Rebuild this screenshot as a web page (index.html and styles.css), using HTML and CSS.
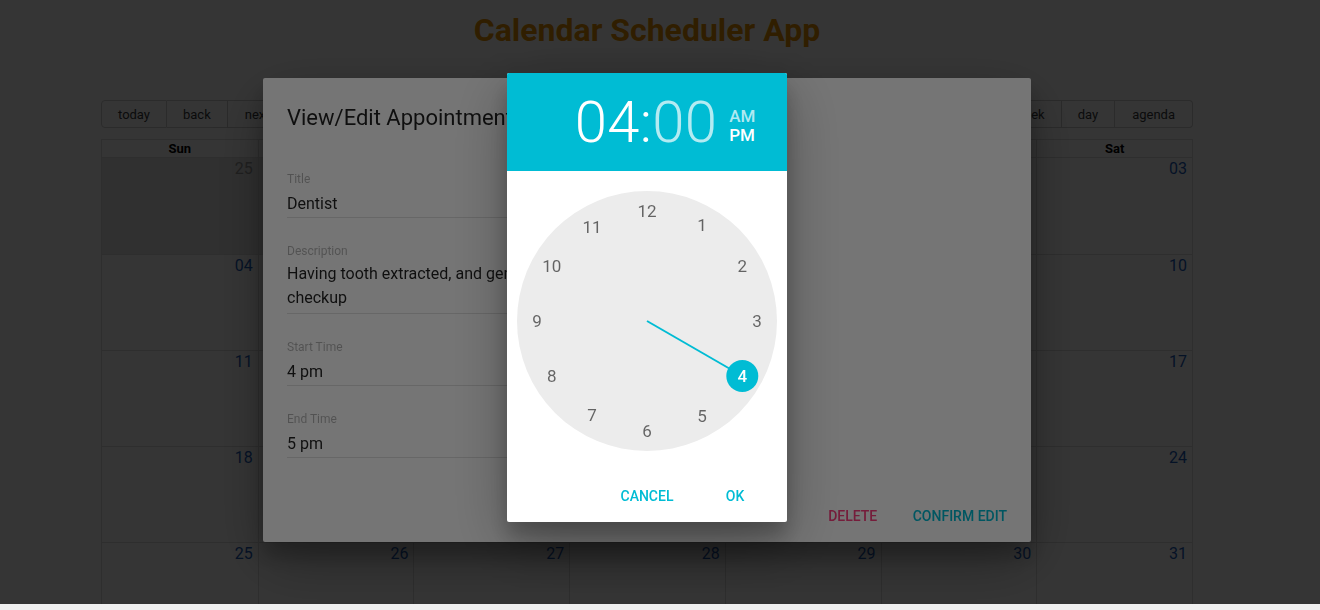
FILE: index.html
```html
<!DOCTYPE html>
<html lang="en">
<head>
<meta charset="utf-8">
<title>Calendar Scheduler App</title>
<link rel="stylesheet" href="styles.css">
</head>
<body>
<div class="app">
  <h1 class="app-title">Calendar Scheduler App</h1>
  <div class="calendar">
    <div class="toolbar">
      <div class="btn-group">
        <button class="tb-btn">today</button>
        <button class="tb-btn">back</button>
        <button class="tb-btn">next</button>
      </div>
      <div class="toolbar-label">March 2018</div>
      <div class="btn-group">
        <button class="tb-btn">month</button>
        <button class="tb-btn">week</button>
        <button class="tb-btn">day</button>
        <button class="tb-btn">agenda</button>
      </div>
    </div>
    <div class="month">
      <div class="month-header">
        <div class="hcell">Sun</div><div class="hcell">Mon</div><div class="hcell">Tue</div><div class="hcell">Wed</div><div class="hcell">Thu</div><div class="hcell">Fri</div><div class="hcell">Sat</div>
      </div>
      <div class="week">
        <div class="day off"><span>25</span></div><div class="day off"><span>26</span></div><div class="day off"><span>27</span></div><div class="day off"><span>28</span></div><div class="day"><span>01</span></div><div class="day"><span>02</span></div><div class="day"><span>03</span></div>
      </div>
      <div class="week">
        <div class="day"><span>04</span></div><div class="day"><span>05</span></div><div class="day"><span>06</span></div><div class="day"><span>07</span></div><div class="day"><span>08</span></div><div class="day"><span>09</span></div><div class="day"><span>10</span></div>
      </div>
      <div class="week">
        <div class="day"><span>11</span></div><div class="day"><span>12</span></div><div class="day"><span>13</span></div><div class="day"><span>14</span></div><div class="day"><span>15</span></div><div class="day"><span>16</span></div><div class="day"><span>17</span></div>
      </div>
      <div class="week">
        <div class="day"><span>18</span></div><div class="day"><span>19</span></div><div class="day"><span>20</span></div><div class="day"><span>21</span></div><div class="day"><span>22</span></div><div class="day"><span>23</span></div><div class="day"><span>24</span></div>
      </div>
      <div class="week">
        <div class="day"><span>25</span></div><div class="day"><span>26</span></div><div class="day"><span>27</span></div><div class="day"><span>28</span></div><div class="day"><span>29</span></div><div class="day"><span>30</span></div><div class="day"><span>31</span></div>
      </div>
    </div>
  </div>
</div>

<div class="layer">
  <div class="dialog edit-dialog">
    <h3 class="edit-title">View/Edit Appointment</h3>
    <div class="edit-body">
      <div class="field">
        <div class="field-label">Title</div>
        <div class="field-value">Dentist</div>
      </div>
      <div class="field">
        <div class="field-label">Description</div>
        <div class="field-value multi">Having tooth extracted, and general checkup</div>
      </div>
      <div class="field">
        <div class="field-label">Start Time</div>
        <div class="field-value">4 pm</div>
      </div>
      <div class="field">
        <div class="field-label">End Time</div>
        <div class="field-value">5 pm</div>
      </div>
    </div>
    <div class="actions">
      <button class="flat-btn delete">Delete</button>
      <button class="flat-btn primary">Confirm Edit</button>
    </div>
  </div>
</div>

<div class="layer">
  <div class="dialog picker">
    <div class="picker-head">
      <div class="time"><span>04:</span><span class="dim">00</span></div>
      <div class="ampm"><span class="dim">AM</span><span>PM</span></div>
    </div>
    <div class="clock-wrap">
      <svg class="clock" width="260" height="260" viewBox="0 0 260 260">
        <circle cx="130" cy="130" r="130" fill="#ececec"/>
        <line x1="130" y1="130" x2="225.3" y2="185" stroke="#00bcd4" stroke-width="2"/>
        <circle cx="225.3" cy="185" r="16" fill="#00bcd4"/>
        <g class="nums" text-anchor="middle" dominant-baseline="central">
          <text x="130" y="20">12</text>
          <text x="185" y="33.5">1</text>
          <text x="225.3" y="75">2</text>
          <text x="240" y="130">3</text>
          <text x="225.3" y="185" class="sel">4</text>
          <text x="185" y="225.3">5</text>
          <text x="130" y="240">6</text>
          <text x="75" y="224">7</text>
          <text x="34.7" y="185">8</text>
          <text x="20" y="130">9</text>
          <text x="34.7" y="75">10</text>
          <text x="75" y="36">11</text>
        </g>
      </svg>
    </div>
    <div class="actions">
      <button class="flat-btn primary">Cancel</button>
      <button class="flat-btn primary">OK</button>
    </div>
  </div>
</div>

<div class="hscroll"></div>
</body>
</html>
```

FILE: styles.css
```css
* { box-sizing: border-box; }

body {
  margin: 0;
  background: #fff;
  font-family: Roboto, "Liberation Sans", sans-serif;
  color: #373a3c;
  overflow: hidden;
}

.app {
  width: 1294px;
}

.app-title {
  margin: 12px 0 0;
  font-size: 32px;
  line-height: 37px;
  font-weight: 700;
  text-align: center;
  color: #e69100;
}

.calendar {
  margin: 51px 101px 0;
}

.toolbar {
  display: flex;
  align-items: center;
  justify-content: space-between;
  margin-bottom: 11px;
}

.toolbar-label {
  flex: 1;
  text-align: center;
  font-size: 14px;
}

.btn-group {
  display: flex;
}

.tb-btn {
  font-family: Roboto, "Liberation Sans", sans-serif;
  font-size: 13px;
  line-height: 14px;
  padding: 7px 16px 5px;
  height: 28px;
  background: #fff;
  color: #373a3c;
  border: 1px solid #ccc;
  border-left: none;
  margin: 0;
}

.tb-btn:first-child {
  border-left: 1px solid #ccc;
  border-radius: 4px 0 0 4px;
}

.tb-btn:last-child {
  border-radius: 0 4px 4px 0;
  padding: 7px 17px 5px;
}

.month {
  border: 1px solid #ddd;
}

.month-header {
  display: grid;
  grid-template-columns: repeat(7, 1fr);
  border-bottom: 1px solid #ddd;
}

.hcell {
  height: 17px;
  padding-top: 1px;
  font-size: 13px;
  line-height: 16px;
  font-weight: 700;
  text-align: center;
  color: #000;
}

.hcell + .hcell {
  border-left: 1px solid #ddd;
}

.week {
  display: grid;
  grid-template-columns: repeat(7, 1fr);
  height: 96px;
}

.week + .week {
  border-top: 1px solid #ddd;
}

.day {
  text-align: right;
  padding: 1px 5px 0 0;
  font-size: 16px;
  line-height: 20px;
  color: #1a5bb8;
}

.day + .day {
  border-left: 1px solid #ddd;
}

.day.off {
  background: #e6e6e6;
  color: #999;
}

/* overlays */
.layer {
  position: fixed;
  top: 0;
  left: 0;
  width: 1320px;
  height: 610px;
  background: rgba(0, 0, 0, 0.54);
  display: flex;
  justify-content: center;
  align-items: flex-start;
  padding-right: 26px;
}

.dialog {
  background: #fff;
  border-radius: 2px;
  display: flex;
  flex-direction: column;
  box-shadow: 0 19px 60px rgba(0, 0, 0, 0.3), 0 15px 20px rgba(0, 0, 0, 0.22);
}

.edit-dialog {
  width: 768px;
  height: 464px;
  margin-top: 78px;
}

.edit-title {
  margin: 0;
  padding: 24px 24px 0;
  font-size: 22px;
  line-height: 32px;
  font-weight: 400;
  color: rgba(0, 0, 0, 0.87);
}

.edit-body {
  padding: 36px 24px 0;
}

.field {
  width: 256px;
}

.field + .field {
  margin-top: 24px;
}

.field-label {
  padding-top: 1px;
  font-size: 12px;
  line-height: 16px;
  color: rgba(0, 0, 0, 0.3);
}

.field-value {
  margin-top: 5px;
  padding-bottom: 1px;
  font-size: 16px;
  line-height: 24px;
  color: rgba(0, 0, 0, 0.87);
  border-bottom: 1px solid #e0e0e0;
}

.field-value.multi {
  margin-top: 3px;
  padding-bottom: 3px;
}

.actions {
  margin-top: auto;
  padding: 8px;
  display: flex;
  justify-content: flex-end;
}

.flat-btn {
  min-width: 88px;
  height: 36px;
  padding: 0 16px;
  border: none;
  background: transparent;
  font-family: Roboto, "Liberation Sans", sans-serif;
  font-size: 14px;
  font-weight: 500;
  text-transform: uppercase;
  margin: 0;
}

.flat-btn.primary { color: #00bcd4; }
.flat-btn.delete { color: #ff4081; }

/* time picker */
.picker {
  width: 280px;
  height: 449px;
  margin-top: 73px;
}

.picker-head {
  height: 98px;
  background: #00bcd4;
  border-radius: 2px 2px 0 0;
  display: grid;
  grid-template-columns: 1fr auto 1fr;
  align-items: center;
  color: #fff;
}

.time {
  grid-column: 2;
  font-size: 58px;
  line-height: 58px;
  font-weight: 300;
  letter-spacing: 0.3px;
  margin-left: -2px;
}

.dim {
  color: rgba(255, 255, 255, 0.7);
}

.ampm {
  grid-column: 3;
  justify-self: start;
  display: flex;
  flex-direction: column;
  margin-left: 12px;
  margin-top: 8px;
  font-size: 17px;
  line-height: 19px;
  font-weight: 500;
}

.clock-wrap {
  padding-top: 20px;
  display: flex;
  justify-content: center;
}

.clock {
  display: block;
}

.nums text {
  font-family: Roboto, "Liberation Sans", sans-serif;
  font-size: 17px;
  fill: rgba(0, 0, 0, 0.58);
}

.nums text.sel {
  fill: #fff;
  font-weight: 500;
}

.hscroll {
  position: fixed;
  left: 0;
  bottom: 0;
  width: 1320px;
  height: 6px;
  background: #f1f1f1;
}
```
